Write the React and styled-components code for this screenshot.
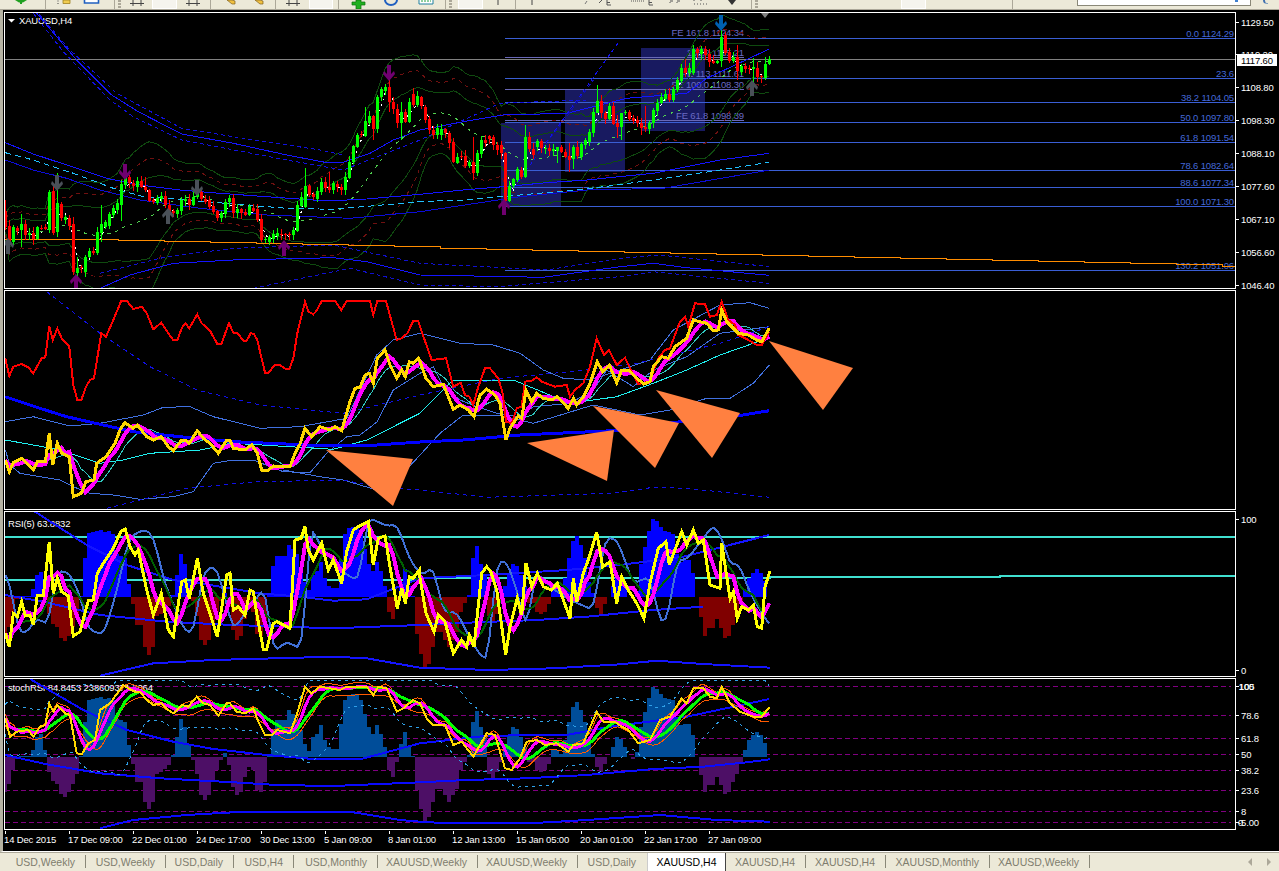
import React from 'react';
import styled, { createGlobalStyle } from 'styled-components';

/* ---------- digitised data (3x zoom coordinates) ---------- */
const CANDLES_A = 'r632 680,r677 725,g680 725,r683 692,g672 690,r672 705,g698 705,r698 718,g682 718,r683 686,r682 686,g575 690,r573 698,g608 695,r612 655,g652 660,r655 678,r672 815,g803 820,r800 803,g770 815,g753 772,r752 760,g695 760,g672 700,g665 680,g642 678,g625 645,g608 630,g552 615,g532 555,r532 550,r548 558,g542 560,r542 562,r560 570,r570 602,r600 606,g594 608,g588 597,r588 615,r615 635,r632 640,g630 642,g600 632,g598 602,r598 615,g590 615,g567 592,r575 598,r597 605,r600 620,r618 635,r633 655,g640 655,g605 642,g595 607,r595 640,g628 640,r628 640,r635 645,g622 645,r623 632,r628 660,r658 720,g716 720,g712 725,g702 718,g698 708,r703 706,r703 706,r703 706,g690 705,g615 692,g590 618,g558 622,r558 585,r582 592,g572 598,g545 575,r545 565,r562 570,g548 570,r552 562,r562 570,g530 570,g485 535,g438 487,g405 440,r402 406,g363 408,g348 368,r348 388,g290 388,g268 292,g262 272,r262 305,r305 328,r328 368,g335 368,r335 365,g305 365,r283 315,g288 315';
const CANDLES_B = 'r292 318,r320 360,r358 390,r390 405,g385 405,g388 405,r388 400,r400 428,r425 485,g470 488,r468 472,r468 497,g485 497,r487 518,g460 518,g420 462,r420 428,r408 418,r410 435,r435 450,r435 460,r460 603,g558 603,g538 558,g508 540,r510 530,g410 530,r412 447,r447 465,g424 442,r424 445,g445 448,r445 452,g447 452,g442 452,r442 455,r455 470,r468 480,g440 478,r440 468,g432 472,g420 435,g396 425,g336 398,g303 338,r303 338,r340 356,g318 356,r318 372,r370 382,g338 382,g335 338,r335 356,r354 362,r360 370,r368 385,r382 388,g368 388,g330 370,g308 332,g290 310,g282 298,r282 300,g268 300,g240 270,g204 242,r204 218,g204 218,g148 218,r148 160,g148 162,r148 165,r162 185,r182 190,g184 188,g110 182,r105 158,r155 182,g172 182,r172 212,g198 215,r198 206,r205 208,g202 208,r203 230,r228 232,g192 234,g178 192';
const WICKS = {16:[600,690],64:[642,740],148:[570,700],172:[520,710],220:[650,825],232:[770,830],304:[615,725],364:[540,662],436:[530,575],916:[505,625],988:[515,580],1096:[320,410],1120:[345,420],1168:[235,335],1204:[305,420],1240:[265,320],
  1576:[375,535],1792:[255,340],1852:[345,415],1864:[338,420],1936:[318,395],1924:[355,405],2080:[135,225],2164:[80,200],2260:[175,262],2212:[135,240],2296:[172,240],1516:[455,610],1420:[410,540],1672:[440,490],1708:[430,515],1720:[435,508],2056:[178,232]};
const HIST = [-105,-80,-40,-5,3,3,3,22,60,68,22,-45,-72,-82,-112,-120,-105,-80,-50,3,105,172,175,178,180,175,178,170,115,110,105,35,-20,-75,-75,-135,-157,-135,-50,-45,-35,-25,5,60,115,90,40,-10,-50,-115,-130,-115,-70,-40,-10,12,-25,-90,-115,-105,-60,-30,-40,-100,-105,-75,5,85,112,112,112,140,130,115,80,40,18,60,70,95,50,30,25,25,100,170,185,190,188,170,130,90,70,95,70,30,-40,-60,-15,40,75,30,3,-100,
  -155,-195,-180,-135,-95,-95,-115,-135,-115,-95,-40,-15,5,105,138,90,60,-50,-70,-45,-15,30,65,90,85,60,30,-15,-15,-40,-45,-40,-20,22,22,10,50,105,150,165,140,105,40,10,-30,-45,-20,0,30,60,55,30,0,-5,15,90,135,178,210,205,190,178,175,170,115,95,100,100,65,0,-55,-105,-85,-85,-60,-85,-110,-105,-75,-50,-20,20,50,65,75,65,42];

const pair = (flat) => { const o = []; for (let i = 0; i < flat.length; i += 2) o.push([flat[i], flat[i + 1]]); return o; };
const path = (a, b, yo) => [...pair(a).map(([x, y]) => [x / 3, y / 3 + yo]), ...pair(b).map(([x, y]) => [x / 3 + 420, y / 3 + yo])];
const X0 = 16 / 3;
const N = 192;
const XS = Array.from({ length: N }, (_, i) => X0 + 4 * i);
const sampleAt = (p, x) => {
  if (x <= p[0][0]) return p[0][1];
  for (let i = 1; i < p.length; i++) if (x <= p[i][0]) { const t = (x - p[i - 1][0]) / (p[i][0] - p[i - 1][0] || 1); return p[i - 1][1] + t * (p[i][1] - p[i - 1][1]); }
  return p[p.length - 1][1];
};
const sample = (p) => XS.map((x) => sampleAt(p, x));
const sma = (v, n) => v.map((_, i) => { const s = v.slice(Math.max(0, i - n + 1), i + 1); return s.reduce((a, b) => a + b, 0) / s.length; });
const centered = (v) => v.map((y, i) => ((v[i - 1] ?? y) + y * 2 + (v[i + 1] ?? y)) / 4);
const sdev = (v, n) => v.map((_, i) => { const s = v.slice(Math.max(0, i - n + 1), i + 1); const m = s.reduce((a, b) => a + b, 0) / s.length; return Math.sqrt(s.reduce((a, b) => a + (b - m) * (b - m), 0) / s.length); });
const str = (v) => v.map((y, i) => `${XS[i].toFixed(1)},${y.toFixed(1)}`).join(' ');
const ptsStr = (p) => p.map(([x, y]) => `${x.toFixed(1)},${y.toFixed(1)}`).join(' ');

const CANDLES = [...CANDLES_A.split(','), ...CANDLES_B.split(',')].map((t, i) => {
  const up = t[0] === 'g';
  const [a, b] = t.slice(1).split(' ').map(Number);
  const zx = 16 + 12 * i;
  const k = ((i * 37 + 11) % 17) / 17;
  const k2 = ((i * 53 + 5) % 13) / 13;
  const w = WICKS[zx] || [a - 4 - k * 14, b + 3 + k2 * 14];
  return { up, x: XS[i], top: a / 3, bot: b / 3, hi: w[0] / 3, lo: w[1] / 3 };
});
const CLOSE = CANDLES.map((c) => (c.up ? c.top : c.bot));

/* ---------- main chart series ---------- */
const m20 = sma(CLOSE, 20);
const s20 = sdev(CLOSE, 20);
const band = (k, c) => m20.map((m, i) => m + k * s20[i] + c);
const MAIN_SOLID = [
  [path([110,40,230,180,335,285,415,335,545,402,700,430,860,465,975,487,1030,487,1110,460,1180,420,1260,390],[130,365,250,345,440,340,620,295,800,280,860,235,1048,147],0),'#1414ff'],
  [path([16,428,100,462,200,495,320,535,420,555,540,570,660,580,800,590,980,603,1100,597,1260,583],[130,570,250,560,380,548,500,540,700,520,800,500,900,480,1048,460],0),'#1414ff'],
  [path([16,480,100,510,200,535,300,570,420,600,600,625,800,645,1050,655,1260,635],[300,590,500,570,730,565,1048,510],0),'#0c0cd8'],
  [path([300,865,390,825,520,790,700,780,1000,773,1100,785,1260,825],[370,832,600,800,700,790,800,803,1048,826],0),'#1414ff'],
];
const MAIN_DASH = [
  [path([90,12,210,150,350,280,545,385,700,410,960,450,1030,465],[],0),'#1010e0'],
  [path([100,40,190,155,330,300,400,350,545,420,860,480,1030,510,1260,420],[240,310,500,300],0),'#1010e0'],
  [path([300,820,500,770,700,745,1000,735,1260,790],[380,810,600,775,720,765,1048,800],0),'#1010d0'],
  [path([760,865,1050,805,1260,855],[230,860,600,830,700,815,1048,850],0),'#1010d0'],
  [path([],[280,565,595,128],0),'#1010f0'],
  [path([],[340,480,440,350,520,240],0),'#1010b0'],
];
const CYAN_DASH = path([16,458,100,480,220,520,340,565,430,590,560,600,700,612,860,625,1000,628,1260,605],[130,600,300,585,500,567,700,540,900,510,1048,487],0);
const ORANGE = (() => { const o = [[5, 239.5], [118, 239.5]]; let y = 239.5; for (let x = 118; x < 1235; x += 46) { y += 1.06; o.push([x, y], [Math.min(x + 46, 1235), y]); } return o; })();
const FIBO_Y = [38.5, 78.5, 102.5, 122.5, 142.5, 170.5, 187.5, 206.5, 270.5];
const FE_Y = [57.5, 89.5, 120.5];
const FIBO_LABELS = [['0.0 1124.29',33],['23.6',73],['38.2 1104.05',97],['50.0 1097.80',117],['61.8 1091.54',137],['78.6 1082.64',165],['88.6 1077.34',182],['100.0 1071.30',201],['130.2 1051.06',265]];
const FE_LABELS = [['FE 161.8 1124.34',32],['138.2 1115.21',52],['FE 113 1111.61',73],['FE 100.0 1108.30',84],['FE 61.8 1098.39',115]];
const ZONES = [[501,123,60,83],[565,89,60,83],[641,48,64,83]];
const UPS = [[8,246,'#4a5058'],[168,216,'#4a5058'],[284,248,'#700070'],[76,282,'#700070'],[504,207,'#700070'],[752,88,'#4a5058']];
const DOWNS = [[57,183,'#4a5058'],[125,172,'#700070'],[197,188,'#4a5058'],[389,73,'#700070'],[721,23,'#0060b0']];

/* ---------- pane 2 ---------- */
const Y2 = path([16,510,28,545,40,518,65,505,85,525,100,540,112,515,136,515,148,430,158,525,172,460,185,490,208,500,220,620,244,610,258,575,282,570,290,520,318,500,345,460,360,420,374,398,400,415,412,405,440,440,460,450,484,440,505,470,520,482,545,450,556,450,568,460,592,422,610,445,630,460,655,490,680,450,690,450,700,475,735,480,755,465,772,490,785,540,805,540,820,528,870,530,885,490,900,462,915,415,935,440,960,410,990,420,1005,410,1025,422,1050,335,1065,295,1080,292,1095,255,1108,250,1120,280,1132,205,1155,180,1170,225,1190,265,1205,240,1216,260,1228,215,1240,220,1255,205],
  [0,215,18,265,40,290,70,283,85,320,100,358,120,345,145,360,162,380,180,315,200,298,225,315,240,340,258,450,270,415,295,378,305,385,318,300,335,335,350,310,370,325,395,330,412,320,445,355,460,325,470,345,490,320,510,280,532,215,548,245,568,225,590,278,605,240,625,240,650,265,672,282,690,275,700,230,725,200,745,205,765,170,800,145,820,90,840,95,860,100,880,122,895,120,905,60,920,95,940,115,955,130,985,135,1010,150,1025,155,1048,115],290);
const R2 = path([16,205,28,258,40,230,65,222,85,232,100,250,125,205,136,202,148,108,158,150,172,115,185,145,208,170,220,285,232,330,244,330,258,290,270,270,282,265,304,130,318,140,340,90,364,32,380,32,400,57,425,50,440,70,460,118,484,98,505,130,520,150,532,150,545,115,556,100,568,115,592,73,605,100,630,122,652,162,664,162,687,100,700,128,712,128,730,152,740,152,752,130,762,132,772,150,795,248,805,248,825,225,840,225,858,238,868,238,880,205,892,130,915,35,925,65,940,73,950,62,965,33,1005,33,1024,60,1040,33,1110,33,1120,75,1132,33,1158,33,1190,150,1205,145,1222,130,1240,93,1255,93,1260,110],
  [0,110,35,210,78,205,100,290,122,278,135,315,148,320,160,345,175,290,195,235,210,235,235,265,248,310,258,395,275,400,290,355,305,350,315,275,335,272,350,262,365,275,405,290,440,285,450,320,465,300,490,280,510,230,530,145,552,195,567,180,590,225,615,203,640,255,655,282,688,275,715,205,735,180,750,175,780,95,795,80,805,110,825,40,855,43,870,80,890,75,905,35,925,90,945,105,955,135,985,150,1010,165,1025,165,1048,125],290);
const Y2S = sample(Y2);
const P2_THICK = path([16,320,110,352,200,380,300,403,400,425,540,440,700,455,880,463,980,468,1100,467,1260,456],[130,450,300,435,580,422,780,395,950,378,1048,362],290);
const P2_DASH = [
  path([140,5,300,130,450,230,590,300,780,345,1030,370,1260,315],[240,265,450,245,650,220,900,160,1048,110],290),
  path([320,655,560,595,770,575,1030,570,1130,590,1260,600],[200,622,580,610,700,592,800,595,1048,622],290),
];
const P2_CYAN = path([16,450,100,465,180,480,300,520,370,510,450,490,600,480,700,460,1000,478,1100,450,1260,370],[100,270,280,270,450,340,590,320,700,280,800,240,900,195,1000,160,1048,140],290);
const P2_BANDS = [
  path([16,395,100,380,210,408,300,400,430,375,490,352,570,350,640,380,780,415,900,410,1040,385,1130,195,1180,150,1260,130],[120,160,220,165,300,190,370,240,430,265,510,270,690,210,760,120,900,45,990,38,1048,55],290),
  path([16,480,30,525,60,550,120,560,180,570,220,590,270,610,340,615,420,628,520,620,580,605,640,520,700,510,760,510,850,545,930,548,980,490,1040,440,1080,435,1132,395,1180,300,1260,250],[40,230,70,290,120,330,170,350,230,370,300,380,340,350,450,340,520,300,560,240,640,290,700,240,800,200,900,130,1048,110],290),
  path([850,540,960,560,1030,570,1130,600,1200,560,1260,495],[60,430,130,375,230,375,300,390,340,400,520,345,660,375,750,360,860,325,930,325,1000,280,1048,225],290),
];
const TRIANGLES = ['326,450 413,459 393,506','527,443 614,430 607,481','593,406 679,423 655,468','656,390 740,413 712,458','769,341 853,368 823,410'];

/* ---------- pane 3 ---------- */
const Y3 = path([16,370,28,410,40,310,52,320,65,275,76,318,90,315,100,345,112,255,130,255,148,95,160,250,172,205,185,245,205,258,220,378,240,365,265,272,280,270,292,190,310,160,340,115,362,65,376,57,390,110,405,135,415,120,440,240,460,315,484,250,505,360,520,380,545,215,556,210,568,265,592,145,610,250,630,310,652,380,680,195,690,190,700,300,715,290,735,315,750,240,760,245,772,320,790,418,800,418,820,340,830,335,870,355,885,90,903,85,915,50,925,120,940,150,965,100,985,180,1000,150,1025,220,1040,125,1060,60,1075,50,1105,35,1120,165,1135,85,1155,78,1170,170,1192,295,1205,235,1216,280,1228,200,1240,205,1258,180],
  [0,205,18,310,42,365,55,315,75,335,100,430,125,390,140,410,148,375,162,410,185,190,200,170,212,185,230,240,257,435,270,350,292,265,305,315,318,160,335,230,352,190,370,230,395,240,412,220,450,325,460,205,470,275,490,190,505,150,530,67,548,170,570,155,590,280,605,200,625,240,650,280,672,325,690,220,715,115,738,95,748,165,785,65,800,105,820,60,835,100,850,90,870,225,900,235,905,100,930,265,940,245,952,325,965,290,985,300,1000,285,1012,350,1025,355,1035,230,1050,183],510);
const B3 = path([16,185,35,240,55,370,80,368,115,320,145,355,165,200,175,180,210,190,250,280,260,360,290,365,310,380,350,245,385,90,405,70,440,58,460,80,500,240,525,290,550,360,580,370,610,180,650,170,700,360,750,290,795,232,820,425,860,395,910,420,930,30,960,110,1040,195,1080,215,1100,20,1165,50,1190,40,1230,150,1260,190],
  [0,200,40,170,70,310,110,305,155,395,195,455,210,420,225,160,260,150,300,270,320,380,345,180,390,230,450,270,520,300,555,85,590,85,640,220,690,200,725,350,745,320,770,150,800,150,880,45,910,90,930,170,955,155,990,250,1048,345],510);
const B3S = centered(sample(B3));
const Y3S = sample(Y3);
const P3_LONG = [
  path([105,5,260,105,380,165,520,210,600,220,780,250,900,260,1000,272,1100,268,1260,205],[200,195,440,180,600,165,790,140,1048,75],510),
  path([16,255,130,275,300,315,500,335,700,345,1000,355,1260,345],[140,338,350,330,500,320,700,300,850,290],510),
  path([300,497,460,460,640,450,1000,440,1100,445,1260,473],[210,480,400,475,600,463,710,452,850,462,1050,473],510),
];
const CYAN3 = [[[5,537],[1235,537]],[[5,580],[420,580],[420,578],[770,578],[770,576.5],[1000,576.5],[1000,575.5],[1235,575.5]]];

/* ---------- pane 4 ---------- */
const Y4 = path([16,130,30,185,50,170,85,165,100,185,120,155,136,150,148,85,160,110,172,90,195,115,210,120,230,235,245,238,265,205,285,195,300,105,330,85,370,30,385,40,405,50,420,50,440,75,460,90,484,85,505,105,520,115,545,90,565,95,590,65,610,85,630,90,655,122,680,85,690,85,710,110,735,115,760,100,775,140,795,180,815,180,830,165,870,175,890,120,915,35,935,55,960,35,1020,45,1040,35,1100,35,1120,60,1135,35,1160,40,1190,110,1210,100,1240,75,1258,85],
  [0,85,20,130,40,150,75,150,100,210,125,200,160,245,200,175,225,180,255,280,275,285,300,250,320,200,350,195,375,210,410,205,445,230,460,210,490,205,530,110,550,140,585,140,605,155,625,165,655,205,690,195,720,135,750,125,785,70,800,85,820,40,850,40,870,65,890,70,905,35,930,85,960,110,1000,125,1025,125,1048,97],675);
const Y4S = sample(Y4);
const P4_LONG = [
  path([90,12,250,105,380,165,520,200,640,222,800,240,950,253,1080,253,1260,205],[200,182,440,180,570,155,800,125,1048,72],675),
  path([16,240,140,268,300,295,480,310,700,322,830,330,1000,333,1260,322],[140,315,320,310,500,300,700,282,850,275,980,262,1050,253],675),
  path([300,460,400,435,560,420,700,412,1060,412,1200,435,1260,440],[50,443,360,443,500,435,650,425,720,420,890,435,1050,440],675),
];
const LEVELS4 = [686.5, 715.5, 738.5, 754.5, 770.5, 790.5, 811.5, 822.5];
const m4 = sma(Y4S, 12);
const s4 = sdev(Y4S, 12);

/* ---------- toolbar / tabs data ---------- */
const TABS = [['USD,Weekly',86],['USD,Weekly',80],['USD,Daily',68],['USD,H4',60],['USD,Monthly',84],['XAUUSD,Weekly',100],['XAUUSD,Weekly',100],['USD,Daily',69],['XAUUSD,H4',79,true],['XAUUSD,H4',80],['XAUUSD,H4',80],['XAUUSD,Monthly',104],['XAUUSD,Weekly',100]];
const TIMES = ['14 Dec 2015','17 Dec 09:00','22 Dec 01:00','24 Dec 17:00','30 Dec 13:00','5 Jan 09:00','8 Jan 01:00','12 Jan 13:00','15 Jan 05:00','20 Jan 01:00','22 Jan 17:00','27 Jan 09:00'];

/* ---------- styled parts ---------- */
const Global = createGlobalStyle`
  html, body { margin: 0; padding: 0; background: #000; overflow: hidden; }
  * { box-sizing: border-box; }
`;
const Page = styled.div`
  width: 1279px; height: 871px; display: flex; flex-direction: column; overflow: hidden;
  font-family: "Liberation Sans", Arial, sans-serif;
`;
const Toolbar = styled.div`
  height: 10px; flex: none; display: flex; align-items: flex-start; overflow: hidden;
  background: #ece9d8; border-bottom: 1px solid #aca899;
`;
const ToolSlot = styled.div`
  height: 9px; width: ${(p) => p.$w}px; flex: none; display: flex; justify-content: center; align-items: flex-start; overflow: hidden;
  ${(p) => p.$pressed && 'background: #f5f4ee; border: 1px solid #fff; border-top: none;'}
  ${(p) => p.$sep && 'justify-content: flex-start; border-left: 1px solid #aca899;'}
`;
const Grip = styled.div`
  width: 3px; height: 8px; flex: none;
  background: repeating-linear-gradient(to bottom, #aca899 0 2px, transparent 2px 3px);
`;
const SearchBox = styled.div`
  height: 6px; width: 100%; background: #fff; border: 1px solid #8a8878; border-top: none;
  display: flex; justify-content: flex-end; padding-right: 12px;
`;
const SearchMark = styled.span` width: 3px; height: 2px; background: #4080d0; `;
const HelpMark = styled.span` width: 5px; height: 4px; border-left: 2px solid #4070b0; border-bottom: 1px solid #80a0c0; border-radius: 0 0 0 4px; `;
const Chart = styled.div`
  flex: 1; display: flex; flex-direction: column; gap: 1px; padding: 2px 0 0 1px; background: #000;
  border-left: 3px solid #b5b2a3; border-bottom: 1px solid #fff;
`;
const Pane = styled.div`
  display: flex; height: ${(p) => p.$h}px; flex: none;
`;
const Plot = styled.div`
  width: 1232px; flex: none; border: 1px solid #fff; overflow: hidden;
`;
const Drawing = styled.svg`
  display: block; font-family: "Liberation Sans", Arial, sans-serif; font-size: 9.5px; letter-spacing: -0.15px;
`;
const AxisColumn = styled.div` flex: 1; overflow: hidden; `;
const TimeBar = styled.div` height: 20px; flex: none; `;
const Trace = styled.polyline`
  fill: none; stroke: ${(p) => p.$c}; stroke-width: ${(p) => p.$w || 1}px;
  stroke-dasharray: ${(p) => p.$d || 'none'}; shape-rendering: crispEdges;
`;
const Block = styled.rect` fill: ${(p) => p.$c}; shape-rendering: crispEdges; `;
const Marker = styled.polygon` fill: ${(p) => p.$c}; `;
const Label = styled.text` fill: ${(p) => p.$c || '#fff'}; text-anchor: ${(p) => p.$anchor || 'start'}; `;
const TabBar = styled.div`
  height: 19px; flex: none; display: flex; align-items: stretch; background: #ece9d8; border-top: 1px solid #aca899;
  font-size: 10.5px;
`;
const Tab = styled.div`
  width: ${(p) => p.$w}px; flex: none; display: flex; align-items: center; justify-content: flex-end; white-space: nowrap;
  padding-right: ${(p) => (p.$active ? 10 : 11)}px; position: relative;
  color: ${(p) => (p.$active ? '#000' : '#7f7d6e')};
  background: ${(p) => (p.$active ? '#fff' : 'transparent')};
  ${(p) => p.$active && 'justify-content: center; padding-right: 0; border-right: 1px solid #444; border-left: 1px solid #ccc;'}
  ${(p) => p.$line && `&::after { content: ''; position: absolute; right: 0; top: 2px; bottom: 3px; width: 1px; background: #8a8878; }`}
`;
const TabScroll = styled.div`
  margin-left: auto; display: flex; align-items: center; gap: 15px; padding-right: 8px;
`;
const ScrollArrow = styled.i`
  width: 0; height: 0; border-top: 4px solid transparent; border-bottom: 4px solid transparent;
  ${(p) => (p.$left ? 'border-right: 4px solid #aca899;' : 'border-left: 4px solid #aca899;')}
`;

/* ---------- small pieces ---------- */
const arrow = (cx, cy, dir) => [[0,-8],[6,-1],[5,2],[2,-1],[2,8],[-2,8],[-2,-1],[-5,2],[-6,-1]].map(([x, y]) => `${cx + x},${cy + dir * y}`).join(' ');

const I = ({ children, w = 16 }) => <svg width={w} height="9" viewBox={`0 0 ${w} 9`}>{children}</svg>;
const HBar = () => <I><path d="M1 3.5H15M4 0V6M12 0V6" stroke="#444" fill="none" /></I>;
const Tick = () => <I><path d="M8 0V5" stroke="#444" /></I>;
const Pencil = () => <I><path d="M3 0L8 4L11 4L11 1L8 0Z" fill="#f0c040" stroke="#806020" strokeWidth=".7" /></I>;

/* [start x, kind, icon] — slot width is the distance to the next start */
const TOOLS = [
  [0],
  [15, 0, <I w={14}><path d="M0 0H12L8 2.5H7V4H5V2.5H4Z" fill="#20a020" /></I>],
  [29],
  [45, 'sep'],
  [55, 0, <I w={7}><path d="M3 0.5V1.5M3 3V4" stroke="#444" /></I>],
  [62, 0, <I w={9}><path d="M1 0H8V3.5H1Z" fill="#f0cc50" stroke="#a08020" strokeWidth=".8" /></I>],
  [71],
  [82, 0, <I w={20}><path d="M2.5 -1H16.5V3H2.5Z" fill="#fff" stroke="#2060c0" strokeWidth="1.6" /></I>],
  [102],
  [114, 'sep'],
  [115, 'grip'],
  [123],
  [129, 0, <HBar />],
  [145],
  [152, 'press'],
  [177],
  [185, 0, <HBar />],
  [201],
  [210, 'sep'],
  [224, 0, <Pencil />],
  [240],
  [252, 0, <Pencil />],
  [268],
  [275, 'sep'],
  [285, 0, <HBar />],
  [301],
  [309, 'press'],
  [333],
  [338, 'sep'],
  [351, 0, <I><path d="M5 0H10V2H14V5H10V9H5V5H1V2H5Z" fill="#20b020" stroke="#107010" strokeWidth=".7" /></I>],
  [367],
  [383, 0, <I><path d="M2 0A6 5 0 0 0 14 0" fill="none" stroke="#2060c0" strokeWidth="2" /></I>],
  [399],
  [418, 0, <I><path d="M1 -1H15V4H1Z" fill="#fff" stroke="#2080a0" /><path d="M3 1H13" stroke="#20a040" strokeDasharray="2 1" /></I>],
  [434],
  [445, 'sep'],
  [446, 'grip'],
  [454],
  [458, 'press'],
  [483],
  [490, 0, <Tick />],
  [506],
  [515, 'sep'],
  [524, 0, <Tick />],
  [540],
  [578, 0, <I w={14}><path d="M7 4L9 1" stroke="#777" /></I>],
  [592],
  [597, 0, <I w={18}><path d="M2 3L5 0M10 0V5H14M10 2.5H13" stroke="#555" fill="none" /></I>],
  [615],
  [630, 0, <I><path d="M1 1H14" stroke="#555" strokeDasharray="1 1" /></I>],
  [646, 0, <I w={12}><path d="M3 0V5H7M3 2.5H6" stroke="#555" fill="none" /></I>],
  [658],
  [668, 0, <I w={14}><path d="M2 1H5M9 1H12M2 3V2M9 3V2" stroke="#555" /></I>],
  [682],
  [692, 0, <I w={18}><path d="M2 4H16" stroke="#555" strokeDasharray="1 2" /><path d="M2 0V1M9 0V1" stroke="#555" /></I>],
  [710],
  [726, 0, <I w={12}><path d="M2 0H10L6 5Z" fill="#333" /></I>],
  [738],
  [751, 'sep'],
  [752, 'grip'],
  [760],
  [901, 'press'],
  [926],
  [1012, 'sep'],
  [1077, 'search'],
  [1251, 'help'],
  [1279],
];

const Candles = () => (
  <g>
    {CANDLES.map((c, i) => (
      <g key={i}>
        <Block $c={c.up ? '#00ff00' : '#ff0000'} x={Math.round(c.x)} y={c.hi} width="1" height={c.lo - c.hi} />
        <Block $c={c.up ? '#00ff00' : '#ff0000'} x={Math.round(c.x) - 1} y={c.top} width="3" height={Math.max(c.bot - c.top, 1)} />
      </g>
    ))}
  </g>
);

const MainChart = () => (
  <Drawing width="1230" height="275" viewBox="5 13 1230 275">
    {ZONES.map(([x, y, w, h]) => <Block key={x} $c="#181a60" x={x} y={y} width={w} height={h} />)}
    <Trace $c="#808080" points="5,59.5 1235,59.5" />
    {FE_Y.map((y) => <Trace key={y} $c="#6868b8" points={`505,${y} 744,${y}`} />)}
    {FIBO_Y.map((y) => <Trace key={y} $c="#3a5ed4" points={`505,${y} 1235,${y}`} />)}
    {FE_LABELS.map(([t, y]) => <Label key={t} $c="#6a6ac4" $anchor="end" x="744" y={y + 3.5}>{t}</Label>)}
    {FIBO_LABELS.map(([t, y]) => <Label key={t} $c="#4468d8" $anchor="end" x="1234" y={y + 3.5}>{t}</Label>)}
    <Label x="19" y="24">XAUUSD,H4</Label>
    <Marker $c="#fff" points="8,19 15,19 11.5,22.5" />
    <Trace $c="#0f4a0f" points={str(band(-2, -12))} />
    <Trace $c="#0f4a0f" points={str(band(2, 12))} />
    <Trace $c="#0f4a0f" points={str(band(-1.1, -5))} />
    <Trace $c="#0f4a0f" points={str(band(1.1, 5))} />
    <Trace $c="#701010" $d="4 4" points={str(band(-1.6, -8))} />
    <Trace $c="#701010" $d="4 4" points={str(band(1.6, 8))} />
    <Trace $c="#50d050" $d="3 5" points={str(m20)} />
    {MAIN_SOLID.map(([p, c], i) => <Trace key={i} $c={c} points={ptsStr(p)} />)}
    {MAIN_DASH.map(([p, c], i) => <Trace key={i} $c={c} $d="4 3" points={ptsStr(p)} />)}
    <Trace $c="#20c0ff" $d="6 4" points={ptsStr(CYAN_DASH)} />
    <Trace $c="#ff8c00" points={ptsStr(ORANGE)} />
    <Trace $c="#ffffff" $d="2 4" points={str(sma(CLOSE, 3).map((y) => y + 1))} />
    <Candles />
    {UPS.map(([x, y, c]) => <Marker key={x} $c={c} points={arrow(x, y, 1)} />)}
    {DOWNS.map(([x, y, c]) => <Marker key={x} $c={c} points={arrow(x, y, -1)} />)}
    <Marker $c="#808080" points="761,13 769,13 765,18" />
  </Drawing>
);

const MomentumPane = () => (
  <Drawing width="1230" height="218" viewBox="5 291 1230 218">
    {P2_BANDS.map((p, i) => <Trace key={i} $c="#4070e0" points={ptsStr(p)} />)}
    <Trace $c="#30c8c0" points={str(sma(Y2S, 8))} />
    <Trace $c="#20f0f0" points={ptsStr(P2_CYAN)} />
    {P2_DASH.map((p, i) => <Trace key={i} $c="#1010e8" $d="4 4" points={ptsStr(p)} />)}
    <Trace $c="#0000ff" $w={3} points={ptsStr(P2_THICK)} />
    <Trace $c="#ff00ff" $w={4} points={str(sma(Y2S, 4))} />
    <Trace $c="#ff0000" $w={2} points={ptsStr(R2)} />
    <Trace $c="#ffd700" $w={3} points={ptsStr(Y2)} />
    {TRIANGLES.map((t) => <Marker key={t} $c="#ff8040" points={t} />)}
  </Drawing>
);

const RsiPane = () => (
  <Drawing width="1230" height="164" viewBox="5 512 1230 164">
    {CYAN3.map((p, i) => <Trace key={i} $c="#40e0d0" $w={2} points={ptsStr(p)} />)}
    {HIST.map((h, i) => {
      const v = h / 0.9 / 3;
      return <Block key={i} $c={v >= 0 ? '#0000ff' : '#800000'} x={Math.round(XS[i]) - 2} y={v >= 0 ? 597 - v : 597} width="4" height={Math.abs(v)} />;
    })}
    <Label x="8" y="527">RSI(5) 63.8832</Label>
    {P3_LONG.map((p, i) => <Trace key={i} $c="#1414ff" $w={2} points={ptsStr(p)} />)}
    <Trace $c="#4070d8" $w={2} points={str(B3S)} />
    <Trace $c="#006000" $w={2} points={str(sma(Y3S, 9))} />
    <Trace $c="#ff00ff" $w={4} points={str(sma(Y3S, 4))} />
    <Trace $c="#ffff00" $w={3} points={ptsStr(Y3)} />
  </Drawing>
);

const StochPane = () => (
  <Drawing width="1230" height="150" viewBox="5 679 1230 150">
    {LEVELS4.map((y) => <Trace key={y} $c="#800080" $d="5 3" points={`5,${y} 1231,${y}`} />)}
    {HIST.map((h, i) => {
      const v = h / 3;
      return <Block key={i} $c={v >= 0 ? '#004d99' : '#4d0f66'} x={Math.round(XS[i]) - 2} y={v >= 0 ? 757 - v : 757} width="4" height={Math.abs(v)} />;
    })}
    <Label x="8" y="691">stochRSI 84.8453 238609371.3064</Label>
    {P4_LONG.map((p, i) => <Trace key={i} $c="#0a0aff" $w={2} points={ptsStr(p)} />)}
    <Trace $c="#30a0e8" $d="3 4" points={str(m4.map((m, i) => Math.max(680, m - 1.5 * s4[i] - 14)))} />
    <Trace $c="#30a0e8" $d="3 4" points={str(m4.map((m, i) => m + 1.5 * s4[i] + 16))} />
    <Trace $c="#ff5a00" points={str(sma(Y4S, 3).map((y) => y - 4))} />
    <Trace $c="#ff5a00" points={str(sma(Y4S, 7).map((y) => y + 7))} />
    <Trace $c="#00ff00" $w={3} points={str(sma(Y4S, 8))} />
    <Trace $c="#ff00ff" $w={3} points={str(sma(Y4S, 4))} />
    <Trace $c="#ffd700" $w={2} points={ptsStr(Y4)} />
  </Drawing>
);

const Axis = ({ top, height, items, children }) => (
  <AxisColumn>
    <Drawing width="43" height={height} viewBox={`1236 ${top} 43 ${height}`}>
      {items.map(([t, y, x]) => (
        <g key={t + y}>
          <Trace $c="#fff" points={`1236,${Math.round(y) + 0.5} 1239,${Math.round(y) + 0.5}`} />
          <Label x={x || 1241} y={y + 3.5}>{t}</Label>
        </g>
      ))}
      {children}
    </Drawing>
  </AxisColumn>
);

const PRICES = [['1129.50',22],['1119.20',54],['1108.80',87],['1098.30',120],['1088.10',153],['1077.60',186],['1067.10',219],['1056.60',252],['1046.40',285]];
const RSI_AXIS = [['100',519],['0',670]];
const STOCH_AXIS = [['105',686,1239],['100',686,1238.5],['78.6',715],['61.8',738],['50',754],['38.2',770],['23.6',790],['8',811],['-5.00',822,1238],['0',822,1238]];

const renderTool = (tool, i) => {
  const [x, kind, icon] = tool;
  const w = (TOOLS[i + 1] ? TOOLS[i + 1][0] : x) - x;
  if (kind === 'sep') return <ToolSlot key={i} $w={w} $sep />;
  if (kind === 'grip') return <ToolSlot key={i} $w={w}><Grip /></ToolSlot>;
  if (kind === 'press') return <ToolSlot key={i} $w={w} $pressed />;
  if (kind === 'search') return <ToolSlot key={i} $w={w}><SearchBox><SearchMark /></SearchBox></ToolSlot>;
  if (kind === 'help') return <ToolSlot key={i} $w={w}><HelpMark /></ToolSlot>;
  return <ToolSlot key={i} $w={w}>{icon}</ToolSlot>;
};

const App = () => (
  <Page>
    <Global />
    <Toolbar>{TOOLS.slice(0, -1).map(renderTool)}</Toolbar>
    <Chart>
      <Pane $h={277}>
        <Plot><MainChart /></Plot>
        <Axis top={12} height={277} items={PRICES}>
          <Block $c="#fff" x="1237" y="54" width="40" height="12" />
          <Label $c="#000" x="1241" y="63.5">1117.60</Label>
        </Axis>
      </Pane>
      <Pane $h={220}>
        <Plot><MomentumPane /></Plot>
      </Pane>
      <Pane $h={166}>
        <Plot><RsiPane /></Plot>
        <Axis top={511} height={166} items={RSI_AXIS} />
      </Pane>
      <Pane $h={152}>
        <Plot><StochPane /></Plot>
        <Axis top={678} height={152} items={STOCH_AXIS} />
      </Pane>
      <TimeBar>
        <Drawing width="1275" height="20" viewBox="4 830 1275 20">
          {TIMES.map((t, i) => (
            <g key={t}>
              <Trace $c="#fff" points={`${5.5 + 64 * i},830 ${5.5 + 64 * i},833`} />
              <Label x={i === 0 ? 4 : 4 + 64 * i} y="841.5">{t}</Label>
            </g>
          ))}
        </Drawing>
      </TimeBar>
    </Chart>
    <TabBar>
      {TABS.map(([t, w, active], i) => (
        <Tab key={i} $w={w} $active={active} $line={!active && i !== 7}>{t}</Tab>
      ))}
      <TabScroll>
        <ScrollArrow $left />
        <ScrollArrow />
      </TabScroll>
    </TabBar>
  </Page>
);

export default App;
